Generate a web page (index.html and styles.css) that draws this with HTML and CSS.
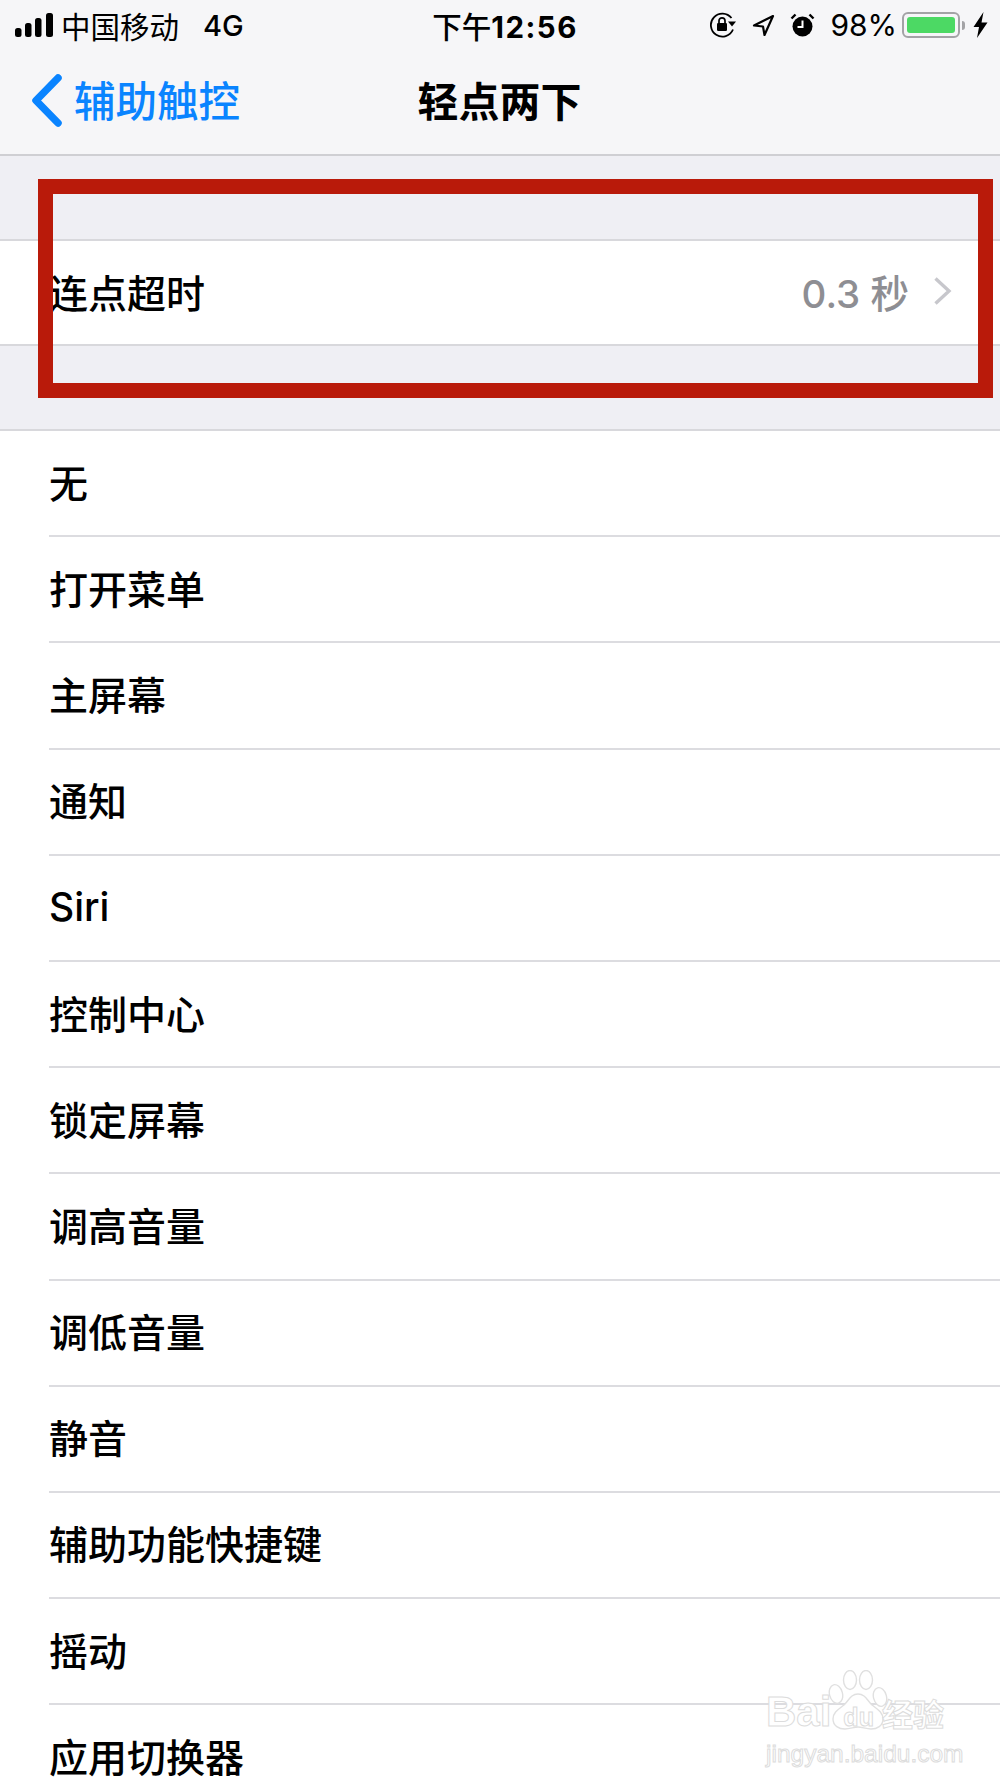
FILE: index.html
```html
<!DOCTYPE html>
<html lang="zh-CN">
<head>
    <meta charset="UTF-8">
    <title>轻点两下</title>
    <link rel="stylesheet" href="styles.css">
</head>
<body>
    <div class="screen">
        <div class="top">
            <div class="status">
                <div class="status-left">
                    <svg class="signal" width="40" height="26" viewBox="0 0 40 26">
                        <rect x="1" y="16" width="6.5" height="9" rx="2.5"/>
                        <rect x="11" y="11" width="6.5" height="14" rx="2.5"/>
                        <rect x="21" y="6" width="6.5" height="19" rx="2.5"/>
                        <rect x="32" y="1" width="7" height="24" rx="2.5"/>
                    </svg>
                    <span class="carrier">中国移动</span>
                    <span class="net">4G</span>
                </div>
                <div class="time">下午<b>12:56</b></div>
                <div class="status-right">
                    <svg class="ic-lock" width="28" height="26" viewBox="0 0 28 26">
                        <path d="M24 17.5A11.5 11.5 0 1 1 22.5 6" fill="none" stroke="#000" stroke-width="1.8"/>
                        <path d="M19 9.5h8l-4 5z"/>
                        <rect x="8" y="11" width="10" height="8" rx="1.2"/>
                        <path d="M10 11V8.8a3 3 0 0 1 6 0V11" fill="none" stroke="#000" stroke-width="1.7"/>
                    </svg>
                    <svg class="ic-loc" width="23" height="23" viewBox="0 0 23 23">
                        <path d="M21 2 2 11.5l9 1 1.5 8.5z" fill="none" stroke="#000" stroke-width="2.2" stroke-linejoin="round"/>
                    </svg>
                    <svg class="ic-alarm" width="25" height="24" viewBox="0 0 25 24">
                        <circle cx="12.5" cy="13.5" r="10"/>
                        <path d="M1.5 5.5 5.5 1.5M23.5 5.5l-4-4" stroke="#000" stroke-width="2.4" fill="none"/>
                        <path d="M12.5 7.5v6.5H7.5" stroke="#fff" stroke-width="2" fill="none"/>
                    </svg>
                    <span class="batt-num">98%</span>
                    <div class="battery"><div class="batt-fill"></div></div>
                    <div class="batt-nub"></div>
                    <svg class="ic-bolt" width="15" height="26" viewBox="0 0 15 26">
                        <path d="M10.5 0 0.5 15h5.5L4 26 14.5 10.5H8.5z"/>
                    </svg>
                </div>
            </div>
            <div class="nav">
                <div class="back">
                    <svg width="34" height="56" viewBox="0 0 34 56">
                        <path d="M28 5 6 27.5 28 50" fill="none" stroke="#0a84ff" stroke-width="7.5" stroke-linecap="round" stroke-linejoin="round"/>
                    </svg>
                    <span>辅助触控</span>
                </div>
                <div class="title">轻点两下</div>
            </div>
        </div>

        <div class="group timeout">
            <div class="row">
                <span>连点超时</span>
                <span class="value">0.3 秒</span>
                <svg class="chev" width="20" height="30" viewBox="0 0 20 30">
                    <path d="M2.5 2.5 16 15 2.5 27.5" fill="none" stroke="#c7c7cc" stroke-width="3.4"/>
                </svg>
            </div>
        </div>

        <div class="group">
            <div class="row">无</div>
            <div class="row">打开菜单</div>
            <div class="row">主屏幕</div>
            <div class="row">通知</div>
            <div class="row siri">Siri</div>
            <div class="row">控制中心</div>
            <div class="row">锁定屏幕</div>
            <div class="row">调高音量</div>
            <div class="row">调低音量</div>
            <div class="row">静音</div>
            <div class="row">辅助功能快捷键</div>
            <div class="row">摇动</div>
            <div class="row">应用切换器</div>
        </div>

        <div class="redbox"></div>

        <div class="watermark">
            <svg class="paw" width="60" height="60" viewBox="0 0 60 60">
                <g fill="#fff" stroke="#e0e0e0" stroke-width="1.4">
                    <ellipse cx="8" cy="24" rx="6.5" ry="9.5" transform="rotate(-15 8 24)"/>
                    <ellipse cx="22" cy="10" rx="6.5" ry="9.5"/>
                    <ellipse cx="38" cy="10" rx="6.5" ry="9.5"/>
                    <ellipse cx="52" cy="27" rx="6.5" ry="9.5" transform="rotate(-15 52 27)"/>
                    <path d="M30 24c-7 0-9 6-14 11-5 4-11 7-11 14 0 7 6 10 12 10 5 0 9-2 13-2s8 2 13 2c6 0 12-3 12-10 0-7-6-10-11-14-5-5-7-11-14-11z"/>
                </g>
            </svg>
            <div class="wm-line1">
                <span class="wm-bai">Bai</span>
                <span class="wm-du">du</span>
                <span class="wm-cn">经验</span>
            </div>
            <div class="wm-line2">jingyan.baidu.com</div>
        </div>
    </div>
</body>
</html>
```
FILE: styles.css
```css
html, body {
    margin: 0;
    padding: 0;
}
body {
    font-family: Inter, "Noto Sans CJK SC", sans-serif;
    background-color: #efeff4;
    color: #000;
}
.screen {
    position: relative;
    width: 1000px;
    height: 1778px;
    overflow: hidden;
}
.top {
    height: 154px;
    background-color: #f6f6f8;
    border-bottom: 2px solid #cfcfd3;
}
.status {
    display: grid;
    grid-template-columns: 1fr auto 1fr;
    align-items: center;
    height: 50px;
    font-size: 29px;
}
.status-left {
    display: flex;
    align-items: center;
    padding-left: 14px;
}
.carrier {
    margin-left: 7px;
    font-size: 29.5px;
}
.net {
    margin-left: 24px;
    font-weight: 500;
}
.time {
    font-size: 29.5px;
    font-weight: 500;
    margin-left: 10px;
}
.time b {
    font-weight: 700;
    letter-spacing: 1.5px;
}
.status-right {
    display: flex;
    align-items: center;
    justify-content: flex-end;
    padding-right: 12px;
}
.ic-loc {
    margin-left: 15px;
}
.ic-alarm {
    margin-left: 15px;
}
.batt-num {
    margin-left: 15px;
    font-size: 30px;
}
.battery {
    box-sizing: border-box;
    width: 58px;
    height: 26px;
    margin-left: 5px;
    padding: 3px;
    border: 2px solid #a3a3a6;
    border-radius: 6px;
}
.batt-fill {
    height: 100%;
    background-color: #4cd964;
    border-radius: 3px;
}
.batt-nub {
    width: 3px;
    height: 9px;
    margin-left: 2px;
    background-color: #a3a3a6;
    border-radius: 0 3px 3px 0;
}
.ic-bolt {
    margin-left: 8px;
}
.nav {
    position: relative;
    display: flex;
    align-items: center;
    justify-content: center;
    height: 102px;
}
.back {
    position: absolute;
    left: 30px;
    top: 0;
    bottom: 0;
    display: flex;
    align-items: center;
    color: #0a84ff;
    font-size: 41.5px;
    font-weight: 500;
}
.back span {
    margin: 0 0 5px 10px;
}
.title {
    margin: 0 0 5px -1px;
    font-size: 41px;
    font-weight: 700;
}
.group {
    background-color: #fff;
    border-top: 2px solid #d8d8dc;
    border-bottom: 2px solid #d8d8dc;
}
.timeout {
    margin-top: 83px;
}
.group + .group {
    margin-top: 83px;
    border-bottom: none;
}
.row {
    display: flex;
    align-items: center;
    box-sizing: border-box;
    height: 106.2px;
    margin-left: 49px;
    padding-bottom: 5px;
    font-size: 39px;
    font-weight: 500;
    border-bottom: 2px solid #dcdce0;
}
.siri {
    padding-bottom: 2px;
}
.timeout .row {
    height: 103px;
    padding-bottom: 3px;
    border-bottom: none;
}
.value {
    margin-left: auto;
    color: #8e8e93;
    font-size: 38.5px;
    font-weight: 500;
}
.chev {
    margin-left: 24px;
    margin-right: 47px;
}
.redbox {
    position: absolute;
    left: 38px;
    top: 179px;
    box-sizing: border-box;
    width: 955px;
    height: 219px;
    border: 15px solid #b91a0a;
}
.watermark {
    position: absolute;
    left: 766px;
    top: 1670px;
    width: 190px;
    height: 90px;
    color: #fff;
    font-family: "Liberation Sans", "Noto Sans CJK SC", sans-serif;
    -webkit-text-stroke: 1px #dcdcdc;
}
.paw {
    position: absolute;
    left: 62px;
    top: 0;
}
.wm-line1 {
    position: relative;
    display: flex;
    align-items: baseline;
    padding-top: 20px;
    font-size: 42px;
    font-weight: 700;
    line-height: 44px;
}
.wm-du {
    margin-left: 12px;
    font-size: 25px;
}
.wm-cn {
    margin-left: 8px;
    font-size: 31px;
}
.wm-line2 {
    position: relative;
    font-size: 24.5px;
    line-height: 30px;
    white-space: nowrap;
}
```
